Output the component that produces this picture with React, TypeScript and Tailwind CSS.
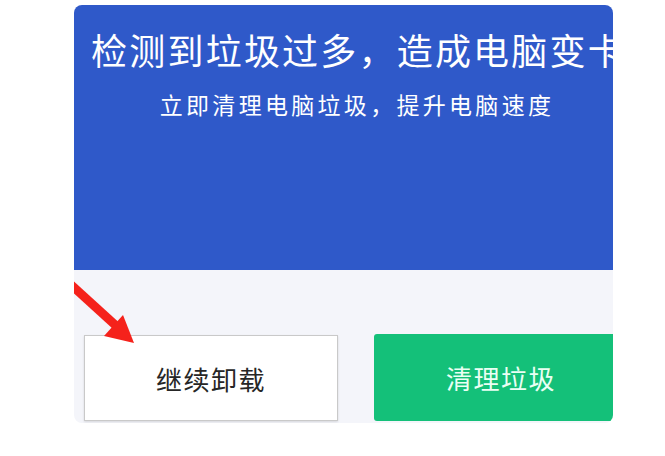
export default function App() {
  return (
    <div className="w-[665px] h-[456px] bg-white relative" style={{ fontFamily: '"Noto Sans CJK SC", "Noto Sans", sans-serif' }}>
      <div className="absolute left-[74px] top-[5px] w-[539px] h-[418px] rounded-lg overflow-hidden">
        <div className="w-[564px] h-full flex flex-col">
          {/* Header */}
          <div className="h-[265px] bg-[#2f59c9] flex flex-col items-center text-white">
            <h1 className="mt-[20px] text-[36px] leading-[48px] tracking-[2.2px] font-normal whitespace-nowrap pl-[5px]">
              检测到垃圾过多，造成电脑变卡
            </h1>
            <p className="mt-[16px] text-[23px] leading-[30px] tracking-[3.3px] whitespace-nowrap pl-[2px]">
              立即清理电脑垃圾，提升电脑速度
            </p>
          </div>
          {/* Actions */}
          <div className="relative flex-1 bg-[#f4f5fa] flex items-end gap-[36px] pl-[10px] pb-[2px]">
            <svg className="absolute left-0 top-0" width="80" height="80" viewBox="0 0 80 80">
              <line x1="-6" y1="12" x2="50" y2="63" stroke="#f5221b" strokeWidth="9" />
              <polygon points="60,73 49,45 30,66" fill="#f5221b" />
            </svg>
            <button className="w-[254px] h-[86px] bg-white border border-[#c9c9c9] shadow-[0_1px_2px_rgba(0,0,0,0.12)] text-[#262626] text-[26px] tracking-[1.5px]">
              继续卸载
            </button>
            <button className="w-[254px] h-[87px] bg-[#14c079] rounded-[3px] text-[#eafff4] text-[26px] tracking-[1.5px]">
              清理垃圾
            </button>
          </div>
        </div>
      </div>
    </div>
  )
}
